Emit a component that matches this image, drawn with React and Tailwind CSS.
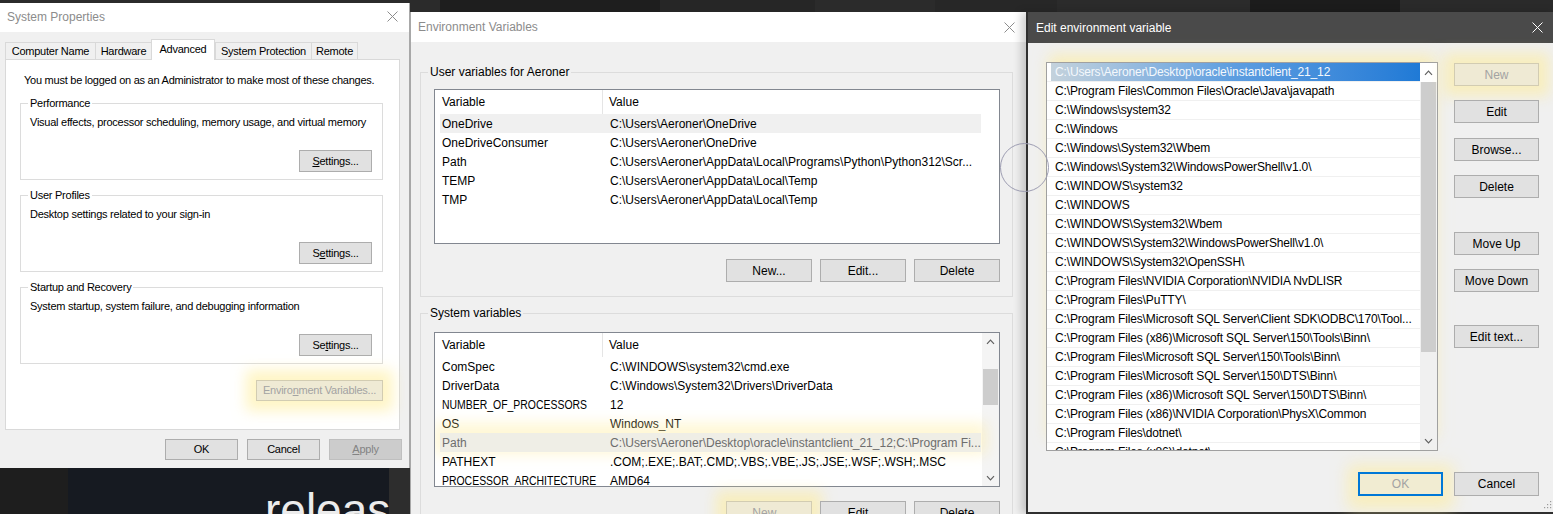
const w = (s) => s.replaceAll('/', '\\')

const CloseX = ({ className }) => (
  <svg width="11" height="11" viewBox="0 0 11 11" className={className}>
    <path d="M0.5 0.5L10.5 10.5M10.5 0.5L0.5 10.5" stroke="currentColor" strokeWidth="1" fill="none" />
  </svg>
)

const Chevron = ({ down }) => (
  <svg width="9" height="6" viewBox="0 0 9 6">
    <path d={down ? 'M1 1.2L4.5 4.8L8 1.2' : 'M1 4.8L4.5 1.2L8 4.8'} stroke="#606060" strokeWidth="1.2" fill="none" />
  </svg>
)

const tones = {
  normal: 'border border-[#adadad] bg-[#e1e1e1] text-black',
  disabled: 'border border-[#bfbfbf] bg-[#cccccc] text-[#838383]',
  glow: 'border border-[#d2ccb2] bg-[#efead4] text-[#a3a3a3] shadow-[0_0_14px_10px_rgba(255,236,150,0.55)]',
  focusGlow: 'border-2 border-[#0078d7] bg-[#f1ecd2] text-[#a3a3a3] shadow-[0_3px_16px_10px_rgba(255,236,150,0.55)]',
}

const Btn = ({ children, tone = 'normal', className = '' }) => (
  <div className={`flex items-center justify-center shrink-0 whitespace-nowrap ${tones[tone]} ${className}`}>
    {children}
  </div>
)

const Group = ({ title, desc, btn, className = '' }) => (
  <fieldset className={`border border-[#dcdcdc] pl-[9px] pr-[10px] pb-[7px] ${className}`}>
    <legend className="-ml-[2px] px-[2px] leading-[13px]">{title}</legend>
    <div className="mt-[6px] leading-[13px]">{desc}</div>
    <div className="flex justify-end mt-[21px]">
      <Btn className="w-[73px] h-[22px]">{btn}</Btn>
    </div>
  </fieldset>
)

const tabs = [
  { label: 'Computer Name', width: 'w-[90px]' },
  { label: 'Hardware', width: 'w-[56px]' },
  { label: 'Advanced', width: 'w-[64px]', active: true },
  { label: 'System Protection', width: 'w-[96px]' },
  { label: 'Remote', width: 'w-[47px]', last: true },
]

const SystemProperties = () => (
  <div className="absolute left-0 top-[3px] w-[410px] h-[465px] flex flex-col bg-[#f0f0f0] border-r border-[#a8a8a8] text-[11px] tracking-[-0.25px]">
    <div className="h-[29px] shrink-0 bg-white flex items-center justify-between pl-[7px] pr-[11px] pb-[2px] tracking-normal">
      <span className="text-[12px] text-[#8c8c8c]">System Properties</span>
      <CloseX className="text-[#8c8c8c]" />
    </div>
    <div className="flex flex-col pl-[5px] pr-[9px] pt-[7px]">
      <div className="relative z-10 -mb-px flex items-end h-[21px]">
        {tabs.map((t) =>
          t.active ? (
            <div key={t.label} className={`${t.width} h-[21px] bg-white border-t border-l border-r border-[#d9d9d9] flex items-center justify-center pb-[2px]`}>
              {t.label}
            </div>
          ) : (
            <div key={t.label} className={`${t.width} h-[17px] mb-px bg-[#f0f0f0] border-t border-l border-[#d9d9d9] flex items-center justify-center ${t.last ? 'border-r' : ''}`}>
              {t.label}
            </div>
          )
        )}
      </div>
      <div className="h-[371px] bg-white border border-[#d9d9d9] flex flex-col pl-[14px] pr-[16px] pt-[14px]">
        <div className="leading-[13px] pl-[4px]">You must be logged on as an Administrator to make most of these changes.</div>
        <Group
          className="mt-[10px]"
          title="Performance"
          desc="Visual effects, processor scheduling, memory usage, and virtual memory"
          btn={<span><u>S</u>ettings...</span>}
        />
        <Group
          className="mt-[9px]"
          title="User Profiles"
          desc="Desktop settings related to your sign-in"
          btn={<span>S<u>e</u>ttings...</span>}
        />
        <Group
          className="mt-[9px]"
          title="Startup and Recovery"
          desc="System startup, system failure, and debugging information"
          btn={<span>Se<u>t</u>tings...</span>}
        />
        <div className="flex justify-end mt-[16px]">
          <Btn tone="glow" className="w-[127px] h-[21px]">
            <span>Enviro<u>n</u>ment Variables...</span>
          </Btn>
        </div>
      </div>
      <div className="flex justify-end gap-[9px] mt-[9px] -mr-[2px]">
        <Btn className="w-[73px] h-[21px]">OK</Btn>
        <Btn className="w-[73px] h-[21px]">Cancel</Btn>
        <Btn tone="disabled" className="w-[73px] h-[21px]">
          <span><u>A</u>pply</span>
        </Btn>
      </div>
    </div>
  </div>
)

const userVars = [
  ['OneDrive', w('C:/Users/Aeroner/OneDrive'), 'soft'],
  ['OneDriveConsumer', w('C:/Users/Aeroner/OneDrive')],
  ['Path', w('C:/Users/Aeroner/AppData/Local/Programs/Python/Python312/Scr...')],
  ['TEMP', w('C:/Users/Aeroner/AppData/Local/Temp')],
  ['TMP', w('C:/Users/Aeroner/AppData/Local/Temp')],
]

const systemVars = [
  ['ComSpec', w('C:/WINDOWS/system32/cmd.exe')],
  ['DriverData', w('C:/Windows/System32/Drivers/DriverData')],
  ['NUMBER_OF_PROCESSORS', '12'],
  ['OS', 'Windows_NT'],
  ['Path', w('C:/Users/Aeroner/Desktop/oracle/instantclient_21_12;C:/Program Fi...'), 'glow'],
  ['PATHEXT', '.COM;.EXE;.BAT;.CMD;.VBS;.VBE;.JS;.JSE;.WSF;.WSH;.MSC'],
  ['PROCESSOR_ARCHITECTURE', 'AMD64'],
]

const rowTone = {
  plain: 'text-black',
  soft: 'bg-[#f0f0f0] text-black',
  glow: 'bg-[#efeee6] text-[#6d6d6d] shadow-[0_-4px_14px_6px_rgba(255,236,150,0.4)]',
}

// long all-caps names render wider in Liberation than in the original UI font
const isLongCaps = (s) => /^[A-Z_]+$/.test(s) && s.length > 9

const VarList = ({ rows, scroll, className = '' }) => (
  <div className={`w-[566px] h-[155px] bg-white border border-[#828790] flex overflow-hidden ${className}`}>
    <div className="flex-1 flex flex-col min-w-0">
      <div className="h-[24px] shrink-0 flex">
        <div className="w-[168px] pl-[7px] border-r border-[#e5e5e5] flex items-center">Variable</div>
        <div className="pl-[6px] flex items-center">Value</div>
      </div>
      {rows.map(([name, value, tone = 'plain']) => (
        <div key={name + value} className={`relative h-[19px] shrink-0 ml-[5px] w-[541px] flex items-center whitespace-nowrap ${rowTone[tone]}`}>
          <div className="w-[163px] pl-[2px]">
            <span className={isLongCaps(name) ? 'inline-block origin-left scale-x-[0.87]' : ''}>{name}</span>
          </div>
          <div className="pl-[7px]">{value}</div>
        </div>
      ))}
    </div>
    {scroll && (
      <div className="w-[17px] shrink-0 bg-[#f4f4f4] flex flex-col">
        <div className="h-[17px] flex items-center justify-center">
          <Chevron />
        </div>
        <div className="h-[36px] mt-[19px] mx-px bg-[#cdcdcd]" />
        <div className="flex-1" />
        <div className="h-[17px] flex items-center justify-center">
          <Chevron down />
        </div>
      </div>
    )}
  </div>
)

const EnvironmentVariables = () => (
  <div className="absolute left-[410px] top-[12px] w-[616px] h-[512px] flex flex-col bg-[#f0f0f0] border-l border-[#a8a8a8] text-[12px]">
    <div className="h-[30px] shrink-0 bg-white flex items-center justify-between pl-[7px] pr-[11px]">
      <span className="text-[#8c8c8c]">Environment Variables</span>
      <CloseX className="text-[#8c8c8c]" />
    </div>
    <div className="flex flex-col pl-[9px] pt-[23px]">
      <fieldset className="w-[593px] border border-[#dcdcdc] pl-[13px] pr-[12px] pb-[14px]">
        <legend className="-ml-[6px] px-[2px] leading-[15px]">User variables for Aeroner</legend>
        <VarList className="mt-[9px]" rows={userVars} />
        <div className="flex justify-end gap-[8px] mt-[15px]">
          <Btn className="w-[86px] h-[23px]">New...</Btn>
          <Btn className="w-[86px] h-[23px]">Edit...</Btn>
          <Btn className="w-[86px] h-[23px]">Delete</Btn>
        </div>
      </fieldset>
      <fieldset className="mt-[9px] w-[593px] border border-[#dcdcdc] pl-[13px] pr-[12px] pb-[14px]">
        <legend className="-ml-[6px] px-[2px] leading-[15px]">System variables</legend>
        <VarList className="mt-[11px]" rows={systemVars} scroll />
        <div className="flex justify-end gap-[8px] mt-[14px]">
          <Btn tone="glow" className="w-[86px] h-[23px]">New...</Btn>
          <Btn className="w-[86px] h-[23px]">Edit...</Btn>
          <Btn className="w-[86px] h-[23px]">Delete</Btn>
        </div>
      </fieldset>
    </div>
  </div>
)

const paths = [
  'C:/Users/Aeroner/Desktop/oracle/instantclient_21_12',
  'C:/Program Files/Common Files/Oracle/Java/javapath',
  'C:/Windows/system32',
  'C:/Windows',
  'C:/Windows/System32/Wbem',
  'C:/Windows/System32/WindowsPowerShell/v1.0/',
  'C:/WINDOWS/system32',
  'C:/WINDOWS',
  'C:/WINDOWS/System32/Wbem',
  'C:/WINDOWS/System32/WindowsPowerShell/v1.0/',
  'C:/WINDOWS/System32/OpenSSH/',
  'C:/Program Files/NVIDIA Corporation/NVIDIA NvDLISR',
  'C:/Program Files/PuTTY/',
  'C:/Program Files/Microsoft SQL Server/Client SDK/ODBC/170/Tool...',
  'C:/Program Files (x86)/Microsoft SQL Server/150/Tools/Binn/',
  'C:/Program Files/Microsoft SQL Server/150/Tools/Binn/',
  'C:/Program Files/Microsoft SQL Server/150/DTS/Binn/',
  'C:/Program Files (x86)/Microsoft SQL Server/150/DTS/Binn/',
  'C:/Program Files (x86)/NVIDIA Corporation/PhysX/Common',
  'C:/Program Files/dotnet/',
  'C:/Program Files (x86)/dotnet/',
].map(w)

const EditVariable = () => (
  <div className="absolute left-[1026px] top-[12px] w-[530px] h-[502px] flex flex-col bg-[#f0f0f0] border-l-2 border-b-2 border-[#2f2f2f] text-[12px] shadow-[-5px_0_8px_rgba(0,0,0,0.18)]">
    <div className="h-[31px] shrink-0 bg-[#4a4a4a] flex items-center justify-between pl-[8px] pr-[13px] text-white">
      <span>Edit environment variable</span>
      <CloseX className="text-white" />
    </div>
    <div className="flex flex-col pl-[18px] pt-[19px] w-[511px]">
      <div className="flex">
        <div className="w-[392px] h-[389px] bg-white border border-[#a0a0a0] flex overflow-hidden shadow-[0_-10px_14px_-3px_rgba(255,236,150,0.6)]">
          <div className="flex-1 flex flex-col min-w-0 tracking-[-0.15px]">
            {paths.map((p, i) => (
              <div key={i} className="h-[19px] shrink-0 border-b border-[#f0f0f0] flex whitespace-nowrap">
                {i === 0 ? (
                  <div className="ml-[4px] pl-[4px] flex-1 flex items-center bg-linear-to-r from-[#c4d2dc] via-[#5c9de0] to-[#1f7ad6] text-[#f4f8fc]">
                    {p}
                  </div>
                ) : (
                  <div className="pl-[8px] flex-1 flex items-center">{p}</div>
                )}
              </div>
            ))}
          </div>
          <div className="w-[17px] shrink-0 bg-[#f0f0f0] flex flex-col">
            <div className="h-[19px] flex items-center justify-center bg-white">
              <Chevron />
            </div>
            <div className="h-[270px] mx-px bg-[#cdcdcd]" />
            <div className="flex-1" />
            <div className="h-[19px] flex items-center justify-center">
              <Chevron down />
            </div>
          </div>
        </div>
        <div className="ml-[16px] pt-px flex flex-col">
          <Btn tone="glow" className="w-[85px] h-[23px]">New</Btn>
          <Btn className="w-[85px] h-[23px] mt-[14px]">Edit</Btn>
          <Btn className="w-[85px] h-[23px] mt-[15px]">Browse...</Btn>
          <Btn className="w-[85px] h-[23px] mt-[14px]">Delete</Btn>
          <Btn className="w-[85px] h-[23px] mt-[34px]">Move Up</Btn>
          <Btn className="w-[85px] h-[23px] mt-[14px]">Move Down</Btn>
          <Btn className="w-[85px] h-[23px] mt-[33px]">Edit text...</Btn>
        </div>
      </div>
      <div className="flex justify-end gap-[11px] mt-[21px]">
        <Btn tone="focusGlow" className="w-[85px] h-[24px]">OK</Btn>
        <Btn className="w-[85px] h-[24px]">Cancel</Btn>
      </div>
    </div>
    <svg className="absolute right-[4px] bottom-[3px]" width="8" height="8" viewBox="0 0 8 8">
      <g fill="#9a9a9a">
        <rect x="6" y="0" width="1.2" height="1.2" />
        <rect x="3" y="3" width="1.2" height="1.2" />
        <rect x="6" y="3" width="1.2" height="1.2" />
        <rect x="0" y="6" width="1.2" height="1.2" />
        <rect x="3" y="6" width="1.2" height="1.2" />
        <rect x="6" y="6" width="1.2" height="1.2" />
      </g>
    </svg>
  </div>
)

export default function App() {
  return (
    <div className="relative w-[1553px] h-[514px] overflow-hidden bg-[#242424] flex flex-col font-['Liberation_Sans',Arial,sans-serif]">
      {/* desktop behind the dialogs */}
      <div className="h-[12px] shrink-0 flex">
        <div className="w-[440px] bg-[#2b2b2b]" />
        <div className="w-[220px] bg-[#1e1e1e]" />
        <div className="w-[155px] bg-[#262626]" />
        <div className="w-[120px] bg-[#2b2b2b]" />
        <div className="w-[122px] bg-[#272727]" />
        <div className="w-[193px] bg-[#2b2b2b]" />
        <div className="w-[150px] bg-[#1c1c1c]" />
        <div className="flex-1 bg-[#2a2a2a]" />
      </div>
      <div className="flex-1" />
      <div className="h-[46px] shrink-0 flex">
        <div className="w-[68px] bg-[#1e1e1e]" />
        <div className="w-[321px] bg-[#161a21] overflow-hidden pl-[197px] pt-[19px]">
          <div className="text-[46px] leading-none text-[#ececec] whitespace-nowrap">releas</div>
        </div>
        <div className="flex-1 bg-[#2d2d2d]" />
      </div>

      <SystemProperties />
      <EnvironmentVariables />
      <EditVariable />

      {/* cursor highlight ring */}
      <div className="absolute left-[1000px] top-[143px] w-[49px] h-[49px] rounded-full border border-[#9d9db2]" />
    </div>
  )
}
